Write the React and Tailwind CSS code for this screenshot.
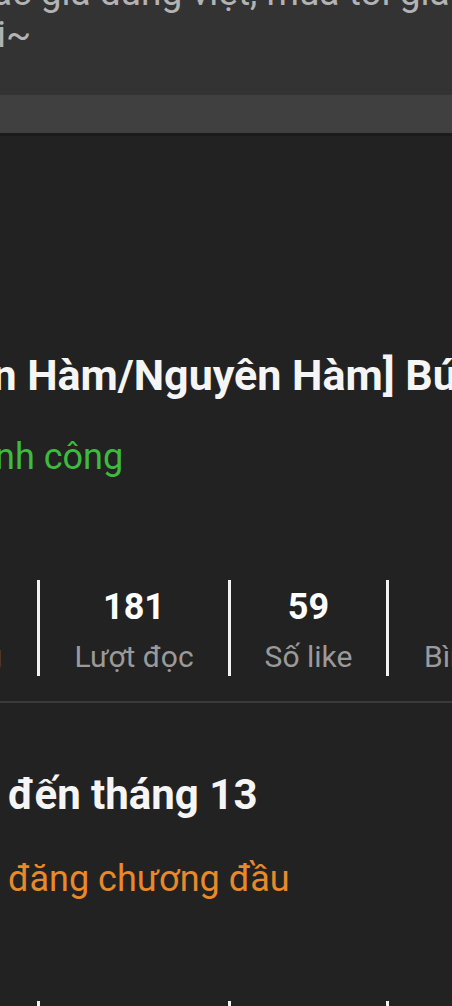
const stats = [
  { value: '181', label: 'Lượt đọc', width: 'w-[188px]' },
  { value: '59', label: 'Số like', width: 'w-[155px]' },
]

function Divider() {
  return <div className="h-[96px] w-[3px] shrink-0 bg-[#f2f2f2]" />
}

function StatsRow() {
  return (
    <div className="flex items-start whitespace-nowrap">
      {/* column cut off by the left edge */}
      <div className="flex h-[96px] w-[37px] shrink-0 justify-end overflow-hidden">
        <div className="flex shrink-0 flex-col items-center pr-[35px] pt-[6px]">
          <span className="h-[42px]" />
          <span className="mt-[9px] text-[30px] leading-[40px] text-[#9a9a9a]">Chương</span>
        </div>
      </div>
      {stats.map((s) => (
        <div key={s.label} className="flex shrink-0">
          <Divider />
          <div className={`flex shrink-0 flex-col items-center pt-[6px] ${s.width}`}>
            <span className="text-[36px] font-bold leading-[42px] text-white">{s.value}</span>
            <span className="mt-[9px] text-[30px] leading-[40px] text-[#9a9a9a]">{s.label}</span>
          </div>
        </div>
      ))}
      <Divider />
      <div className="flex shrink-0 flex-col pl-[35px] pt-[6px]">
        <span className="h-[42px]" />
        <span className="mt-[9px] text-[30px] leading-[40px] text-[#9a9a9a]">Bình luận</span>
      </div>
    </div>
  )
}

export default function App() {
  return (
    <div
      className="h-[1006px] w-[452px] overflow-hidden bg-[#222222]"
      style={{ fontFamily: 'Roboto, "Noto Sans", sans-serif' }}
    >
      {/* description block, scrolled partly out of view */}
      <div className="h-[95px] overflow-hidden whitespace-nowrap bg-[#333333] text-[37px] leading-[42px] text-[#b3b3b3]">
        <p className="-ml-[8px] -mt-[28px]">ác giả dùng việt, mua tôi giả</p>
        <p className="-ml-[3px]">i~</p>
      </div>
      <div className="h-[38px] bg-[#404040]" />
      <div className="h-[3px] bg-[#1b1b1b]" />

      <div className="overflow-hidden whitespace-nowrap">
        <h1 className="-ml-[19px] mt-[212px] text-[43px] font-bold leading-[54px] text-[#f5f5f5]">
          in Hàm/Nguyên Hàm] Búp
        </h1>
        <p className="-ml-[5px] mt-[35px] text-[36px] leading-[40px] text-[#3dbb3d]">nh công</p>
      </div>

      <div className="mt-[103px]">
        <StatsRow />
      </div>

      <div className="mt-[24px] h-[2px] bg-[#3a3a3a]" />

      <div className="overflow-hidden whitespace-nowrap pl-[8px]">
        <h2 className="mt-[67px] text-[42px] font-bold leading-[50px] text-[#f5f5f5]">đến tháng 13</h2>
        <p className="mt-[39px] text-[36px] leading-[40px] text-[#e8892a]">đăng chương đầu</p>
      </div>

      <div className="mt-[102px]">
        <StatsRow />
      </div>
    </div>
  )
}
